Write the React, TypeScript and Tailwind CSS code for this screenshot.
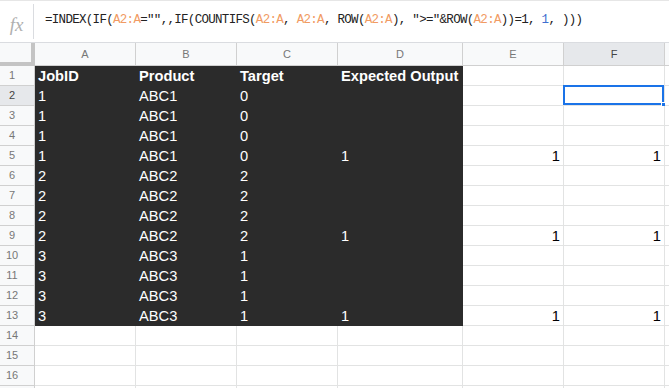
import React from "react";

type Col = { key: string; width: string };

const COLS: Col[] = [
  { key: "A", width: "w-[101px]" },
  { key: "B", width: "w-[101px]" },
  { key: "C", width: "w-[101px]" },
  { key: "D", width: "w-[125px]" },
  { key: "E", width: "w-[101px]" },
  { key: "F", width: "w-[101px]" },
  { key: "G", width: "w-[40px]" },
];

// cells per row: A..F ; rows 1-13 have the dark fill on A-D
const DATA: string[][] = [
  ["JobID", "Product", "Target", "Expected Output", "", ""],
  ["1", "ABC1", "0", "", "", ""],
  ["1", "ABC1", "0", "", "", ""],
  ["1", "ABC1", "0", "", "", ""],
  ["1", "ABC1", "0", "1", "1", "1"],
  ["2", "ABC2", "2", "", "", ""],
  ["2", "ABC2", "2", "", "", ""],
  ["2", "ABC2", "2", "", "", ""],
  ["2", "ABC2", "2", "1", "1", "1"],
  ["3", "ABC3", "1", "", "", ""],
  ["3", "ABC3", "1", "", "", ""],
  ["3", "ABC3", "1", "", "", ""],
  ["3", "ABC3", "1", "1", "1", "1"],
  ["", "", "", "", "", ""],
  ["", "", "", "", "", ""],
  ["", "", "", "", "", ""],
  ["", "", "", "", "", ""],
];

function Range({ children }: { children: React.ReactNode }) {
  return <span className="text-[#f19b63]">{children}</span>;
}

function FormulaBar() {
  return (
    <div className="flex h-[43px] shrink-0 border-b border-[#dadce0] border-t border-t-[#e6e6e6]">
      <div className="flex w-[33px] shrink-0 items-center justify-center pt-[6px]">
        <span className="font-['Liberation_Serif',serif] text-[19px] italic text-[#b0b0b0] leading-none">
          fx
        </span>
      </div>
      <div className="my-[3px] w-px bg-[#dadce0]" />
      <div className="whitespace-pre pl-[11px] pt-[10px] font-['Liberation_Mono',monospace] text-[12.5px] leading-[18px] tracking-[-0.7px] text-[#222]">
        =INDEX(IF(<Range>A2:A</Range>="",,IF(COUNTIFS(<Range>A2:A</Range>, <Range>A2:A</Range>, ROW(
        <Range>A2:A</Range>), "&gt;="&amp;ROW(<Range>A2:A</Range>))=1, <span className="text-[#3f6fd0]">1</span>, )))
      </div>
    </div>
  );
}

function HeaderRow() {
  return (
    <div className="flex h-[23px] shrink-0">
      <div className="w-[35px] shrink-0 border-r-[4px] border-b-[4px] border-[#c4c4c4] bg-[#f8f9fa]" />
      {COLS.map((c) => (
        <div
          key={c.key}
          className={`${c.width} flex shrink-0 items-center justify-center border-r border-b border-[#d0d0d0] text-[11px] ${
            c.key === "F" ? "bg-[#e6e8eb] text-[#444]" : "bg-[#f8f9fa] text-[#777]"
          }`}
        >
          {c.key === "G" ? "" : c.key}
        </div>
      ))}
    </div>
  );
}

function Row({ index, cells }: { index: number; cells: string[] }) {
  const rowNum = index + 1;
  const darkRow = rowNum <= 13;
  return (
    <div className="flex h-[20px] shrink-0">
      <div
        className={`flex w-[35px] shrink-0 items-center border-r border-b border-[#d0d0d0] text-[11px] ${
          rowNum === 2 ? "bg-[#e6e8eb] text-[#444]" : "bg-[#f8f9fa] text-[#777]"
        }`}
      >
        <span className="w-[24px] text-center">{rowNum <= 16 ? rowNum : ""}</span>
      </div>
      {COLS.map((c, ci) => {
        const value = cells[ci] ?? "";
        const dark = darkRow && ci < 4;
        const right = ci >= 4;
        return (
          <div
            key={c.key}
            className={`${c.width} relative flex shrink-0 items-end border-r border-b leading-[17px] text-[14.67px] ${
              dark
                ? "bg-[#2b2b2b] border-[#2b2b2b] text-white"
                : "bg-white border-[#e2e3e3] text-black"
            } ${right ? "justify-end pr-[3px]" : "pl-[3px]"} ${
              rowNum === 1 ? "font-bold" : ""
            }`}
          >
            {value}
            {rowNum === 2 && c.key === "F" && (
              <>
                <div className="absolute -left-px -top-px h-[20px] w-[101px] border-2 border-[#1a73e8]" />
                <div className="absolute -right-[4px] -bottom-[4px] h-[7px] w-[7px] border border-white bg-[#1a73e8]" />
              </>
            )}
          </div>
        );
      })}
    </div>
  );
}

export default function App() {
  return (
    <div className="flex h-[388px] w-[669px] flex-col overflow-hidden bg-white font-['Liberation_Sans',Arial,sans-serif]">
      <FormulaBar />
      <HeaderRow />
      {DATA.map((cells, i) => (
        <Row key={i} index={i} cells={cells} />
      ))}
    </div>
  );
}
